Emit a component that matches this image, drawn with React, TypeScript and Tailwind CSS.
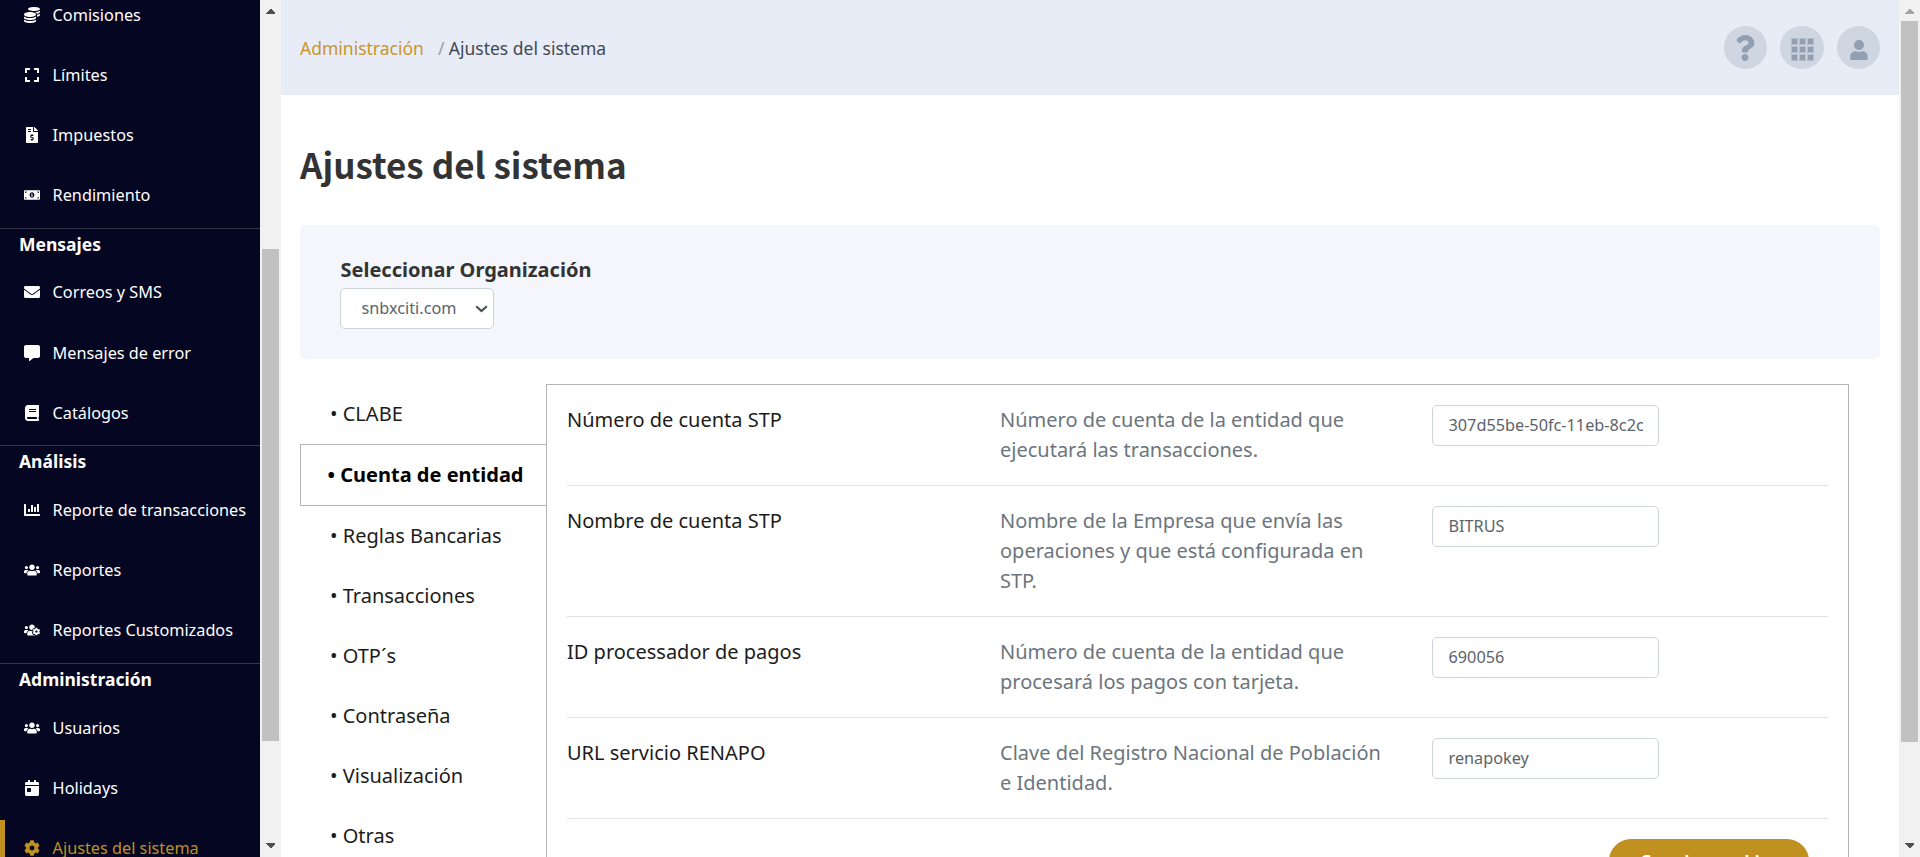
import React from "react";
import type { IconType } from "react-icons";
import {
  FaBook,
  FaCalendarDay,
  FaChartBar,
  FaCog,
  FaCoins,
  FaCommentAlt,
  FaEnvelope,
  FaExpand,
  FaFileInvoiceDollar,
  FaMoneyBillAlt,
  FaQuestion,
  FaUser,
  FaUsers,
  FaUsersCog,
} from "react-icons/fa";

type Item = { label: string; icon: IconType; active?: boolean };
type Group = { title?: string; items: Item[] };

const groups: Group[] = [
  {
    items: [
      { label: "Comisiones", icon: FaCoins },
      { label: "Límites", icon: FaExpand },
      { label: "Impuestos", icon: FaFileInvoiceDollar },
      { label: "Rendimiento", icon: FaMoneyBillAlt },
    ],
  },
  {
    title: "Mensajes",
    items: [
      { label: "Correos y SMS", icon: FaEnvelope },
      { label: "Mensajes de error", icon: FaCommentAlt },
      { label: "Catálogos", icon: FaBook },
    ],
  },
  {
    title: "Análisis",
    items: [
      { label: "Reporte de transacciones", icon: FaChartBar },
      { label: "Reportes", icon: FaUsers },
      { label: "Reportes Customizados", icon: FaUsersCog },
    ],
  },
  {
    title: "Administración",
    items: [
      { label: "Usuarios", icon: FaUsers },
      { label: "Holidays", icon: FaCalendarDay },
      { label: "Ajustes del sistema", icon: FaCog, active: true },
    ],
  },
];

const tabs = ["CLABE", "Cuenta de entidad", "Reglas Bancarias", "Transacciones", "OTP´s", "Contraseña", "Visualización", "Otras"];

const fields = [
  { label: "Número de cuenta STP", help: "Número de cuenta de la entidad que ejecutará las transacciones.", value: "307d55be-50fc-11eb-8c2c-0a58a9feac02" },
  { label: "Nombre de cuenta STP", help: "Nombre de la Empresa que envía las operaciones y que está configurada en STP.", value: "BITRUS" },
  { label: "ID processador de pagos", help: "Número de cuenta de la entidad que procesará los pagos con tarjeta.", value: "690056" },
  { label: "URL servicio RENAPO", help: "Clave del Registro Nacional de Población e Identidad.", value: "renapokey" },
];

function ScrollArrow({ down, dim }: { down?: boolean; dim?: boolean }) {
  return (
    <svg viewBox="0 0 21 21" className={`block h-[21px] w-[21px] shrink-0 ${dim ? "fill-[#a3a3a3]" : "fill-[#505050]"}`} shapeRendering="crispEdges">
      {down ? <path d="M6 7h9v1L10.5 12.500L6 8z" /> : <path d="M6 14h9v-1L10.500 8.500L6 13z" />}
    </svg>
  );
}

function Scrollbar({ main }: { main?: boolean }) {
  return (
    <div className="flex h-full w-[21px] shrink-0 flex-col bg-[#f1f1f1]">
      <ScrollArrow dim={main} />
      <div className={main ? "mx-[2px] h-[721px] bg-[#c1c1c1]" : "mx-[2px] mt-[228px] h-[492px] bg-[#c1c1c1]"} />
      <div className="mt-auto">
        <ScrollArrow down />
      </div>
    </div>
  );
}

function Sidebar() {
  return (
    <nav className="h-full w-[260px] shrink-0 overflow-hidden bg-[#050621] text-white">
      <div className="mt-[-13.2px]">
        {groups.map((g, i) => (
          <section key={i}>
            {g.title && (
              <h2 className="h-[37.05px] border-t border-[#343548] pt-[3px] pl-[19px] text-[17.500px] leading-[25px] font-bold">{g.title}</h2>
            )}
            {g.items.map(({ label, icon: Icon, active }) => (
              <a
                key={label}
                className={`mb-[6px] flex h-[54.2px] items-center border-l-[5px] pt-[1.250px] ${active ? "border-[#c09120] text-[#c09120]" : "border-transparent"}`}
              >
                <span className="ml-[19px] flex w-[16px] justify-center">
                  <Icon size={16} />
                </span>
                <span className="ml-[12.600px] text-[16.250px] leading-[24px] whitespace-nowrap">{label}</span>
              </a>
            ))}
          </section>
        ))}
      </div>
    </nav>
  );
}

function RoundButton({ children, label }: { children: React.ReactNode; label: string }) {
  return (
    <button aria-label={label} className="flex size-[43.500px] items-center justify-center rounded-full bg-[#cfd5e1] text-[#929fb1]">
      {children}
    </button>
  );
}

function GridIcon() {
  const p = [0.5, 8.500, 16.500];
  return (
    <svg width="23" height="23" viewBox="0 0 23 23" className="mt-[3px] ml-[1.500px] fill-[#929fb1] stroke-[#b4bdcb]">
      {p.map((y) => p.map((x) => <rect key={`${x}-${y}`} x={x} y={y} width="6" height="6" />))}
    </svg>
  );
}

export default function App() {
  return (
    <div className="flex h-[857px] w-[1920px] overflow-hidden bg-white font-['Noto_Sans',sans-serif]">
      <Sidebar />
      <Scrollbar />
      <main className="h-full min-w-0 flex-1 overflow-hidden">
        <header className="flex h-[95px] items-center justify-between bg-[#e8ecf7] pr-[19px] pl-[19px]">
          <div className="flex text-[17.500px] leading-[26px]">
            <a className="text-[#c8962b]">Administración</a>
            <span className="ml-[14px] text-[#929fb1]">/</span>
            <span className="ml-[4.400px] text-[#444850]">Ajustes del sistema</span>
          </div>
          <div className="flex gap-[13px]">
            <RoundButton label="Ayuda"><FaQuestion size={26} /></RoundButton>
            <RoundButton label="Aplicaciones"><GridIcon /></RoundButton>
            <RoundButton label="Perfil"><FaUser size={20} className="mt-[5px] ml-[1px]" /></RoundButton>
          </div>
        </header>

        <h1 className="mt-[39px] h-[60px] pl-[19px] font-['Noto_Sans_CJK_SC',sans-serif] text-[35px] leading-[60px] font-bold text-[#333333]">
          Ajustes del sistema
        </h1>

        <div className="mt-[31px] mr-[19px] ml-[19px] h-[134px] rounded-[5px] bg-[#f4f6fc] pt-[30px] pl-[40px]">
          <div className="h-[33px] pl-[0.500px] text-[20px] leading-[30px] font-bold text-[#333333]">Seleccionar Organización</div>
          <div className="flex h-[41px] w-[154px] items-center justify-between rounded-[5px] border border-[#ced4da] bg-white pr-[5px] pl-[20.500px] text-[16.250px] text-[#5c636b]">
            <span>snbxciti.com</span>
            <svg width="13" height="8" viewBox="0 0 13 8" fill="none" className="stroke-[#495057]" strokeWidth="2.200">
              <path d="M1.200 1.200L6.500 6L11.800 1.200" />
            </svg>
          </div>
        </div>

        <div className="mt-[25px] ml-[19px] flex text-[20px] leading-[30px] text-black">
          <ul className="z-10 w-[246px] shrink-0">
            {tabs.map((t, i) =>
              i === 1 ? (
                <li key={t} className="flex h-[62px] items-center border border-r-0 border-[#b3b3b3] bg-white pl-[26.500px] font-bold whitespace-pre">• {t}</li>
              ) : (
                <li key={t} className="flex h-[60px] items-center pl-[30px] whitespace-pre text-[#1c1c1c]">• {t}</li>
              ),
            )}
          </ul>
          <div className="h-[600px] w-[1303px] shrink-0 border border-[#b3b3b3] px-[20px]">
            {fields.map((f) => (
              <div key={f.label} className="flex items-start border-b border-[#dee2e6] py-[20px]">
                <div className="w-[433px] shrink-0 text-[#1c1c1c]">{f.label}</div>
                <div className="w-[393px] shrink-0 text-[#6c757d]">{f.help}</div>
                <input
                  readOnly
                  value={f.value}
                  className="ml-[39px] h-[41px] w-[227px] rounded-[5px] border border-[#ced4da] pr-[15px] pl-[15.500px] pb-[1px] text-[16.250px] text-[#5c636b]"
                />
              </div>
            ))}
            <div className="flex justify-end pt-[20px] pr-[19px]">
              <button className="h-[44px] w-[200px] rounded-full bg-[#c09120] text-[16.250px] font-bold text-white">Guardar cambios</button>
            </div>
          </div>
        </div>
      </main>
      <Scrollbar main />
    </div>
  );
}
